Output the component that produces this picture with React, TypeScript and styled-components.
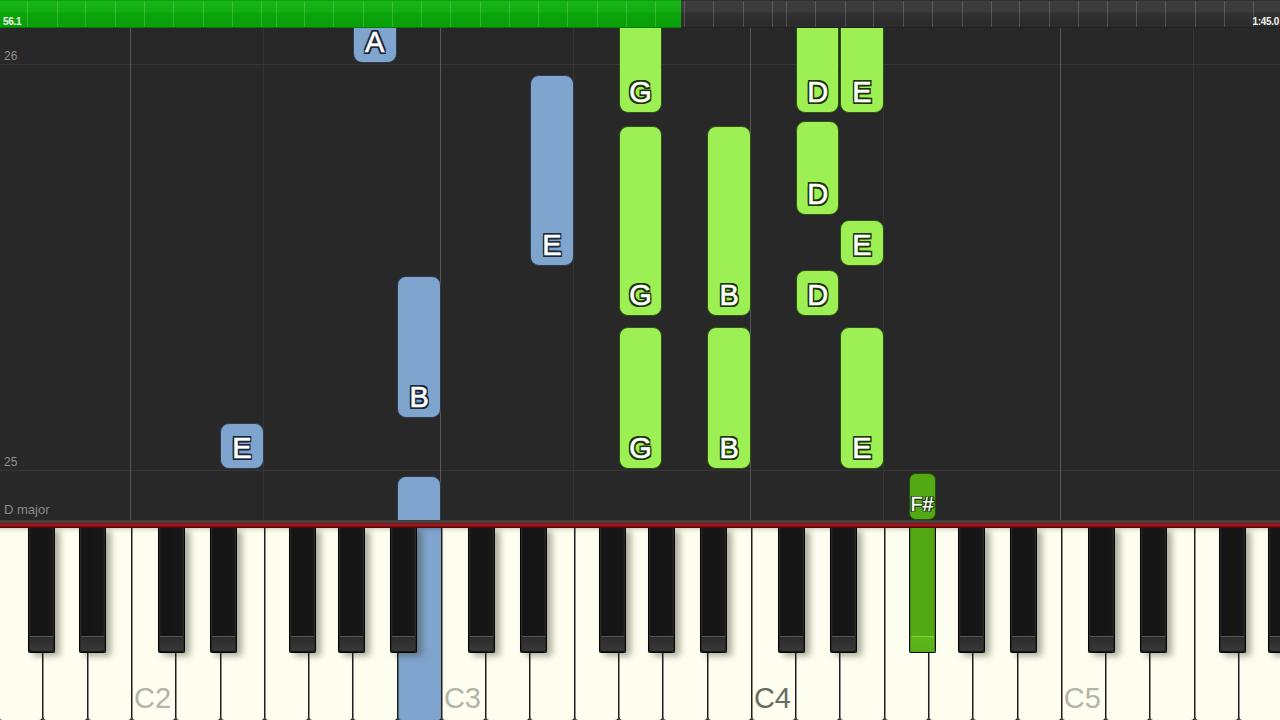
import React from "react";
import styled, { createGlobalStyle, css } from "styled-components";

const KEY_W = 44.29;
const KEY_X0 = -1.9;
const keyX = (i: number) => KEY_X0 + i * KEY_W;
const ROLL_TOP = 28;
const ROLL_H = 492;
const OCTAVE = KEY_W * 7;

type Hand = "left" | "right" | "rightDark";

const GlobalStyle = createGlobalStyle`
  html, body { margin: 0; padding: 0; }
  body {
    background: #282828;
    font-family: "Liberation Sans", Arial, sans-serif;
    overflow: hidden;
  }
  #root { width: 1280px; height: 720px; }
`;

const Screen = styled.div`
  width: 1280px;
  height: 720px;
  display: flex;
  flex-direction: column;
  overflow: hidden;
  background: #282828;
`;

/* ---------- Timeline ---------- */
const Timeline = styled.div`
  position: relative;
  flex: 0 0 28px;
  display: flex;
  background: linear-gradient(
    to bottom,
    #242424 0,
    #3d3d3d 1px,
    #3a3a3a 12px,
    #303030 13px,
    #2c2c2c 27px,
    #161616 28px
  );
`;

const Progress = styled.div`
  flex: 0 0 auto;
  height: 100%;
  background: linear-gradient(
    to bottom,
    #0a8a0a 0,
    #17b417 1px,
    #13ae13 12px,
    #0ba40b 13px,
    #099f09 27px,
    #055a05 28px
  );
`;

const Tick = styled.span`
  position: absolute;
  top: 1px;
  bottom: 1px;
  width: 1px;
  background: rgba(255, 255, 255, 0.17);
`;

const TimeRow = styled.div`
  position: absolute;
  inset: 0;
  display: flex;
  justify-content: space-between;
  align-items: flex-end;
  padding: 0 0 1px 3px;
`;

const TimeText = styled.span<{ $end?: boolean }>`
  font-size: 10px;
  line-height: 11px;
  font-weight: 700;
  color: #f2f2f2;
  letter-spacing: -0.3px;
  ${(p) =>
    p.$end &&
    css`
      padding-right: 1px;
    `}
`;

/* ---------- Roll ---------- */
const Roll = styled.div`
  position: relative;
  flex: 0 0 ${ROLL_H}px;
  background-color: #282828;
  background-image: linear-gradient(to right, #585858 0 1px, transparent 1px),
    linear-gradient(to right, #343434 0 1px, transparent 1px),
    linear-gradient(to bottom, #353535 0 1px, transparent 1px);
  background-size: ${OCTAVE}px 100%, ${OCTAVE}px 100%, 100% 406px;
  background-position: 130px 0, 263px 0, 0 36px;
`;

const MeasureLabel = styled.span`
  position: absolute;
  left: 4px;
  font-size: 12px;
  line-height: 12px;
  color: #8e8e8e;
`;

const KeyName = styled.span`
  position: absolute;
  left: 4px;
  bottom: 3px;
  font-size: 13px;
  line-height: 14px;
  color: #8a8a8a;
`;

const toneColors: Record<Hand, { fill: string; edge: string; ink: string }> = {
  left: { fill: "#7fa4cd", edge: "#2b3a4d", ink: "#1b2636" },
  right: { fill: "#9cf053", edge: "#2e5212", ink: "#1d3509" },
  rightDark: { fill: "#52a914", edge: "#24500a", ink: "#173405" },
};

const Note = styled.div<{ $tone: Hand; $small?: boolean; $cutTop?: boolean; $cutBottom?: boolean }>`
  position: absolute;
  box-sizing: border-box;
  display: flex;
  align-items: flex-end;
  justify-content: center;
  padding-bottom: ${(p) => (p.$small ? "5px" : "7px")};
  border-radius: ${(p) => (p.$small ? "7px" : "9px")};
  background: ${(p) => toneColors[p.$tone].fill};
  border: 1px solid ${(p) => toneColors[p.$tone].edge};
  ${(p) =>
    p.$cutTop &&
    css`
      border-top: none;
      border-top-left-radius: 0;
      border-top-right-radius: 0;
    `}
  ${(p) =>
    p.$cutBottom &&
    css`
      border-bottom: none;
      border-bottom-left-radius: 0;
      border-bottom-right-radius: 0;
    `}
`;

const NoteLabel = styled.span<{ $tone: Hand; $small?: boolean }>`
  font-size: ${(p) => (p.$small ? "20px" : "29px")};
  line-height: ${(p) => (p.$small ? "20px" : "26px")};
  color: #fff;
  -webkit-text-stroke: ${(p) => (p.$small ? "0.3px" : "0.6px")} #fff;
  text-shadow: ${(p) => {
    const c = toneColors[p.$tone].ink;
    const d = p.$small ? 1.2 : 1.6;
    return [
      `${d}px 0 0 ${c}`,
      `-${d}px 0 0 ${c}`,
      `0 ${d}px 0 ${c}`,
      `0 -${d}px 0 ${c}`,
      `${d}px ${d}px 0 ${c}`,
      `-${d}px ${d}px 0 ${c}`,
      `${d}px -${d}px 0 ${c}`,
      `-${d}px -${d}px 0 ${c}`,
    ].join(", ");
  }};
`;

/* ---------- Keyboard ---------- */
const KeyboardEdge = styled.div`
  flex: 0 0 8px;
  background: linear-gradient(
    to bottom,
    #3a3a3a 0,
    #474747 2px,
    #3e3e3e 3px,
    #6e0c10 3px,
    #a3181c 4px,
    #951418 6px,
    #6a0a0d 7px,
    #3a0405 8px
  );
`;

const Keyboard = styled.div`
  position: relative;
  flex: 1 1 auto;
  background: #1c1c1c;
  overflow: hidden;
`;

const WhiteRow = styled.div`
  display: flex;
  height: 100%;
  margin-left: ${KEY_X0}px;
`;

const WhiteKey = styled.div<{ $lit?: Hand }>`
  flex: 0 0 ${KEY_W}px;
  box-sizing: border-box;
  height: 100%;
  display: flex;
  flex-direction: column;
  justify-content: flex-end;
  padding: 0 0 7px 3px;
  border-radius: 0 0 3px 3px;
  background: ${(p) => (p.$lit ? toneColors[p.$lit].fill : "#fefef0")};
  box-shadow: inset 1.5px 0 0 #1e1e1e, inset 0 4px 4px -3px rgba(0, 0, 0, 0.25);
`;

const OctaveLabel = styled.span<{ $middle?: boolean }>`
  font-size: 29px;
  line-height: 1;
  color: ${(p) => (p.$middle ? "#6c6c66" : "#b4b4ab")};
`;

const BlackKey = styled.div<{ $lit?: Hand }>`
  position: absolute;
  top: 0;
  width: 27px;
  height: 125px;
  box-sizing: border-box;
  border: 1px solid #050505;
  border-top: none;
  border-radius: 0 0 2px 2px;
  background: ${(p) =>
    p.$lit
      ? "linear-gradient(to right, #3f8c0c 0, #55ab16 2px, #52a814 calc(100% - 2px), #3f8c0c 100%)"
      : "linear-gradient(to right, #2e2e2e 0, #141414 2px, #171717 calc(100% - 2px), #2e2e2e 100%)"};
  box-shadow: ${(p) =>
    p.$lit ? "none" : "5px 3px 6px rgba(50, 50, 30, 0.4)"};

  &::after {
    content: "";
    position: absolute;
    left: 1px;
    right: 1px;
    bottom: 1px;
    height: 15px;
    border-radius: 0 0 2px 2px;
    background: ${(p) =>
      p.$lit
        ? "linear-gradient(to bottom, #7fd23a 0 1px, #5db81c 1px, #58b018 100%)"
        : "linear-gradient(to bottom, #555 0 1px, #2c2c2c 1px, #383838 100%)"};
  }
`;

/* ---------- Data ---------- */
const ticks = [
  27, 57, 85, 115, 144, 173, 203, 232, 261, 276, 304, 333, 363, 392, 421, 450,
  480, 509, 538, 567, 597, 626, 655, 684, 713, 743, 772, 786, 815, 845, 873, 903,
  932, 962, 991, 1019, 1049, 1078, 1107, 1136, 1165, 1195, 1224, 1253,
];

type NoteData = { key: number; top: number; bottom: number; label: string; tone: Hand };

const notes: NoteData[] = [
  { key: 8, top: 10, bottom: 63, label: "A", tone: "left" },
  { key: 12, top: 75, bottom: 266, label: "E", tone: "left" },
  { key: 9, top: 276, bottom: 418, label: "B", tone: "left" },
  { key: 5, top: 423, bottom: 469, label: "E", tone: "left" },
  { key: 9, top: 476, bottom: 532, label: "", tone: "left" },
  { key: 14, top: 10, bottom: 113, label: "G", tone: "right" },
  { key: 14, top: 126, bottom: 316, label: "G", tone: "right" },
  { key: 14, top: 327, bottom: 469, label: "G", tone: "right" },
  { key: 16, top: 126, bottom: 316, label: "B", tone: "right" },
  { key: 16, top: 327, bottom: 469, label: "B", tone: "right" },
  { key: 18, top: 10, bottom: 113, label: "D", tone: "right" },
  { key: 18, top: 121, bottom: 215, label: "D", tone: "right" },
  { key: 18, top: 270, bottom: 316, label: "D", tone: "right" },
  { key: 19, top: 10, bottom: 113, label: "E", tone: "right" },
  { key: 19, top: 220, bottom: 266, label: "E", tone: "right" },
  { key: 19, top: 327, bottom: 469, label: "E", tone: "right" },
];

const NAMES = "GABCDEF";
const BLACK_OFFSET: Record<string, number> = { C: -4.2, D: 3.5, F: -6.1, G: -1, A: 6.3 };
const WHITE_COUNT = 29;

const blackKeys: { id: string; left: number; lit?: Hand }[] = [];
for (let i = 0; i < WHITE_COUNT; i++) {
  const n = NAMES[i % 7];
  if (n in BLACK_OFFSET) {
    const center = keyX(i + 1) + BLACK_OFFSET[n];
    blackKeys.push({
      id: `b${i}`,
      left: center - 13.5,
      lit: i === 20 ? "rightDark" : undefined,
    });
  }
}

const whiteKeys = Array.from({ length: WHITE_COUNT }, (_, i) => {
  const name = NAMES[i % 7];
  const octave = name === "C" ? 2 + Math.floor((i - 3) / 7) : null;
  return {
    id: i,
    label: octave !== null ? `C${octave}` : "",
    middle: octave === 4,
    lit: i === 9 ? ("left" as Hand) : undefined,
  };
});

const fSharpLeft = blackKeys.find((b) => b.lit)!.left;

export default function App() {
  return (
    <>
      <GlobalStyle />
      <Screen>
        <Timeline>
          <Progress style={{ width: 681 }} />
          {ticks.map((x) => (
            <Tick key={x} style={{ left: x }} />
          ))}
          <TimeRow>
            <TimeText>56.1</TimeText>
            <TimeText $end>1:45.0</TimeText>
          </TimeRow>
        </Timeline>

        <Roll>
          <MeasureLabel style={{ top: 22 }}>26</MeasureLabel>
          <MeasureLabel style={{ top: 428 }}>25</MeasureLabel>
          <KeyName>D major</KeyName>
          {notes.map((n, idx) => {
            const top = Math.max(0, n.top - ROLL_TOP);
            const bottom = Math.min(ROLL_H, n.bottom - ROLL_TOP);
            return (
              <Note
                key={idx}
                $tone={n.tone}
                $cutTop={n.top < ROLL_TOP}
                $cutBottom={n.bottom - ROLL_TOP > ROLL_H}
                style={{
                  left: keyX(n.key) + 0.6,
                  width: 43.5,
                  top,
                  height: bottom - top,
                }}
              >
                {n.label && <NoteLabel $tone={n.tone}>{n.label}</NoteLabel>}
              </Note>
            );
          })}
          <Note
            $tone="rightDark"
            $small
            style={{ left: fSharpLeft, width: 27, top: 473 - ROLL_TOP, height: 47 }}
          >
            <NoteLabel $tone="rightDark" $small>
              F#
            </NoteLabel>
          </Note>
        </Roll>

        <KeyboardEdge />

        <Keyboard>
          <WhiteRow>
            {whiteKeys.map((k) => (
              <WhiteKey key={k.id} $lit={k.lit}>
                {k.label && <OctaveLabel $middle={k.middle}>{k.label}</OctaveLabel>}
              </WhiteKey>
            ))}
          </WhiteRow>
          {blackKeys.map((b) => (
            <BlackKey key={b.id} $lit={b.lit} style={{ left: b.left }} />
          ))}
        </Keyboard>
      </Screen>
    </>
  );
}
